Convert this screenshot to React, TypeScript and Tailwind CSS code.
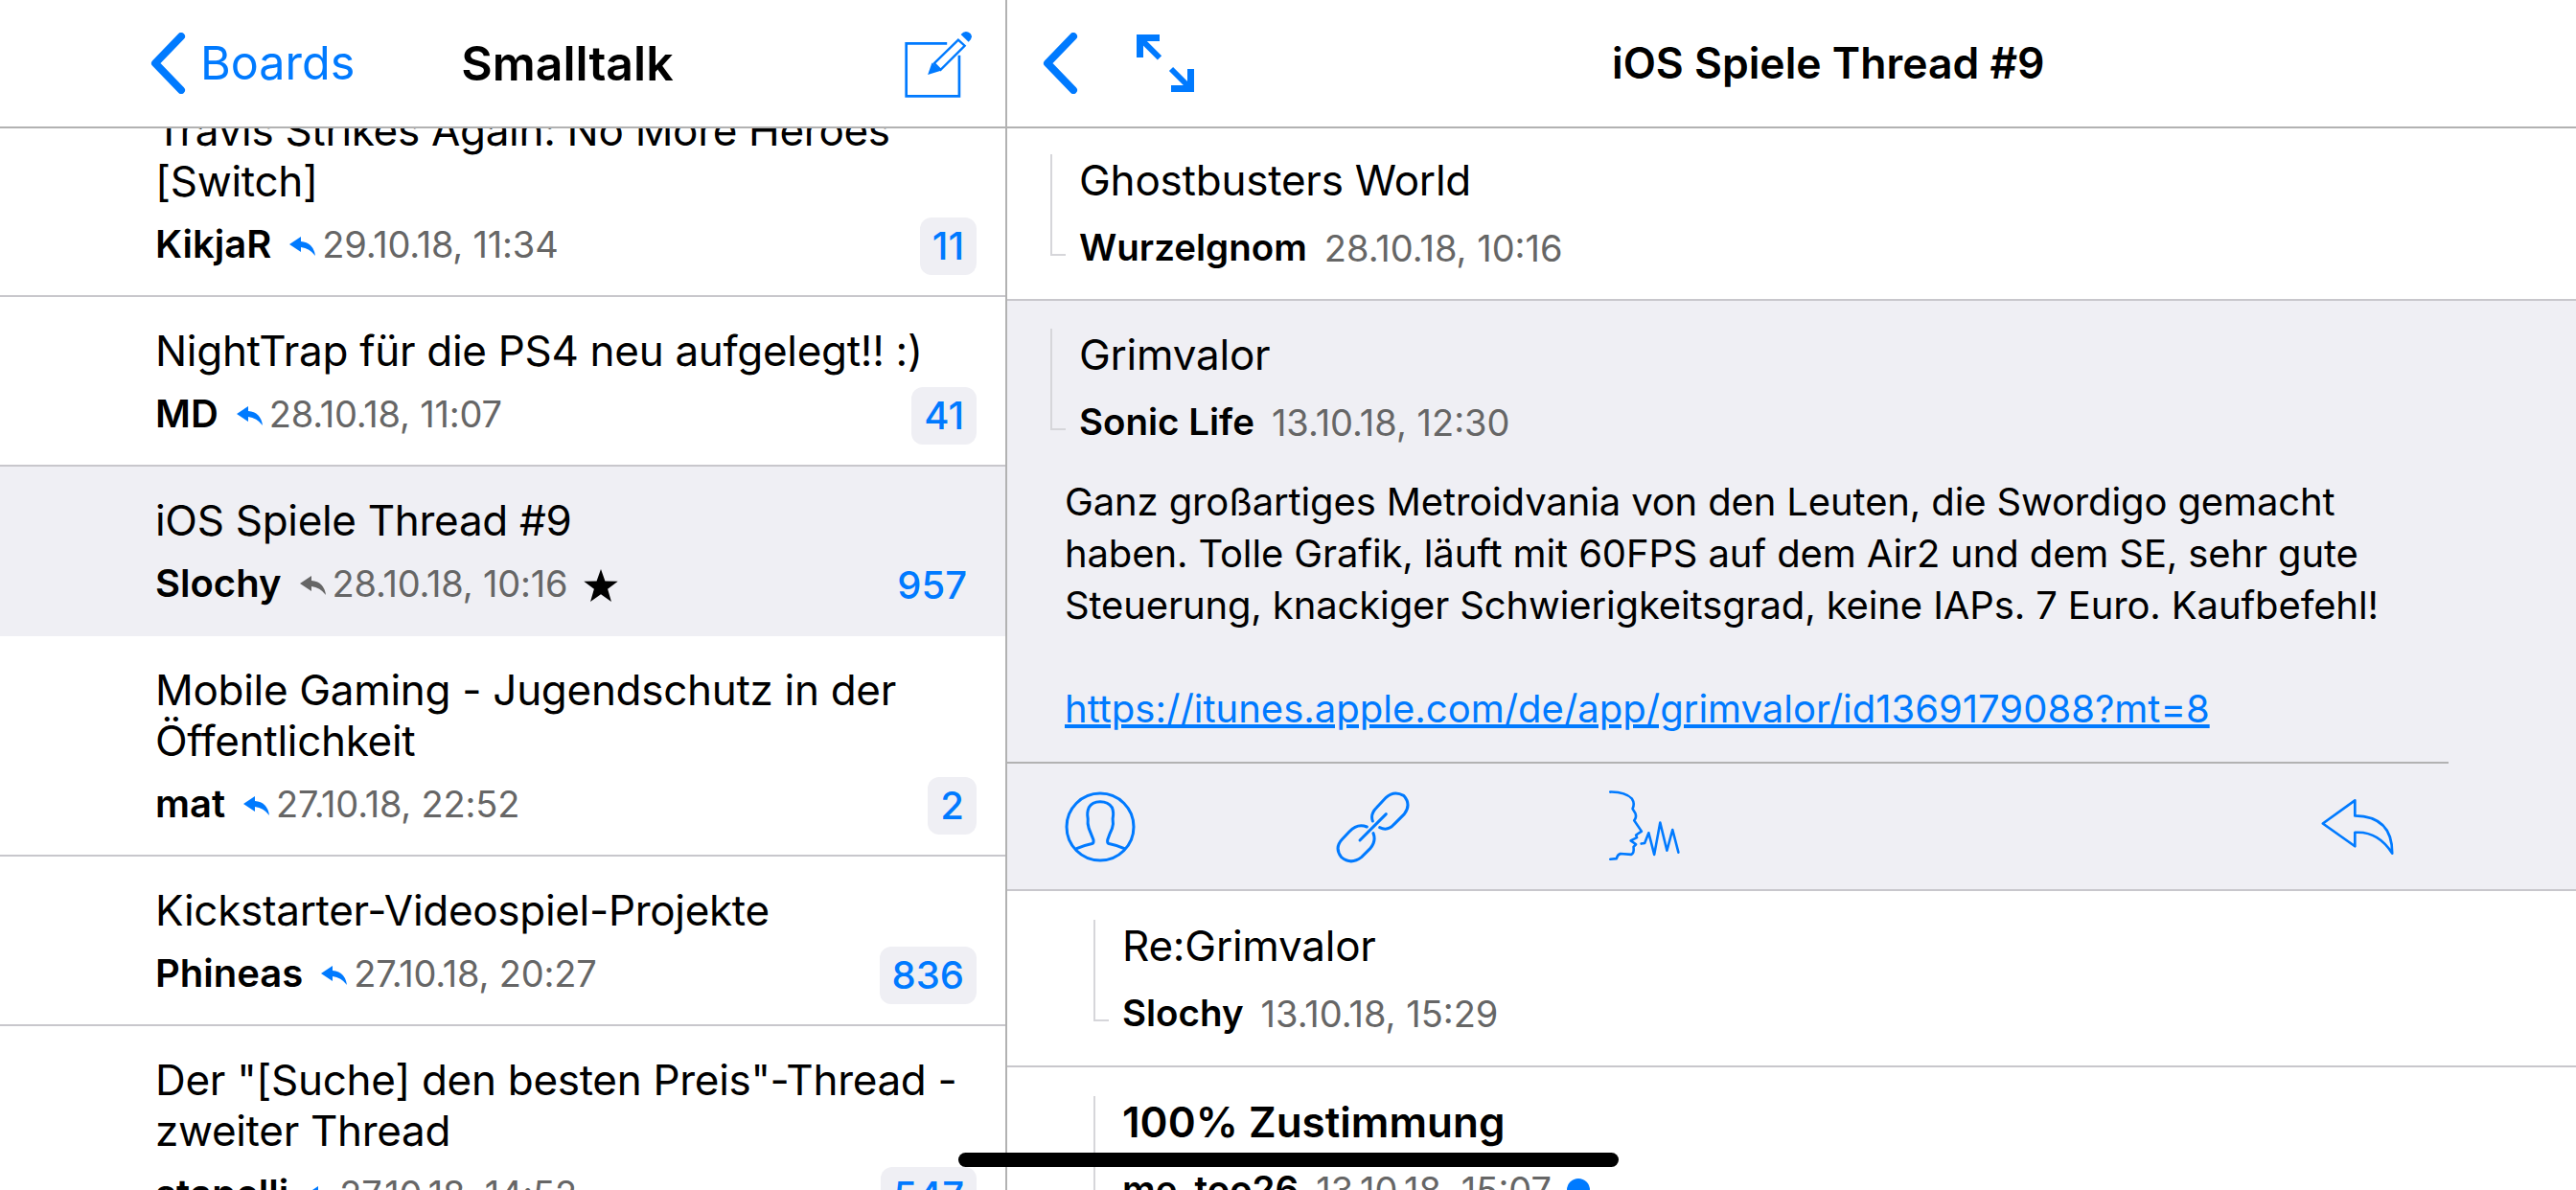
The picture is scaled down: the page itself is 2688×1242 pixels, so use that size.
import React from "react";

const Reply = ({ gray }: { gray?: boolean }) => (
  <svg width="27" height="20" viewBox="0 0 27 20" className="shrink-0">
    <path
      d="M0 8 L12 0 L12 5 Q25 6 27 20 Q21 12 12 11 L12 16 Z"
      fill={gray ? "#666666" : "#007aff"}
    />
  </svg>
);

const BackChevron = () => (
  <svg width="38" height="64" viewBox="0 0 38 64" className="shrink-0">
    <path
      d="M32 4 L5 32 L32 60"
      fill="none"
      stroke="#007aff"
      strokeWidth="8"
      strokeLinecap="round"
      strokeLinejoin="round"
    />
  </svg>
);

const ComposeIcon = () => (
  <svg width="72" height="71" viewBox="70 60 215 212" className="shrink-0">
    <path d="M205 103 L78 103 L78 267 L243 267 L243 140" fill="none" stroke="#007aff" strokeWidth="8" />
    <path d="M165 165 L240 92 L260 110 L185 185 Z" fill="none" stroke="#007aff" strokeWidth="7" />
    <path d="M145 200 L158 163 L186 188 Z" fill="#007aff" />
    <path d="M248 75 Q262 58 278 72 Q288 85 272 98 Z" fill="#007aff" />
  </svg>
);

const ExpandIcon = () => (
  <svg width="60" height="60" viewBox="348 75 180 180" className="shrink-0">
    <path d="M348 75 L420 75 L420 96 L369 96 L369 147 L348 147 Z" fill="#007aff" />
    <path d="M360 88 L420 148" stroke="#007aff" strokeWidth="18" />
    <path d="M528 183 L528 255 L456 255 L456 234 L507 234 L507 183 Z" fill="#007aff" />
    <path d="M456 183 L516 243" stroke="#007aff" strokeWidth="18" />
  </svg>
);

const PersonIcon = () => (
  <svg width="74" height="74" viewBox="65 40 220 220" className="shrink-0" fill="none" stroke="#007aff" strokeWidth="9">
    <circle cx="175" cy="150" r="104" />
    <path d="M100 218 Q125 207 150 202 Q156 200 154 190 Q146 170 140 155 Q135 140 137 125 Q133 105 140 90 Q150 72 175 72 Q200 72 212 90 Q218 105 214 125 Q217 140 212 155 Q205 170 198 190 Q196 200 202 202 Q228 207 252 218" />
  </svg>
);

const LinkIcon = () => (
  <svg width="80" height="80" viewBox="65 30 240 240" className="shrink-0" fill="none" stroke="#007aff" strokeWidth="9" strokeLinecap="round">
    <path d="M183 132 Q175 110 195 90 L225 58 Q250 35 280 52 Q305 80 282 110 L250 142 Q230 165 205 152" />
    <path d="M165 150 Q135 138 110 165 L88 188 Q62 215 85 245 Q115 270 148 245 L175 218 Q195 195 185 170" />
    <path d="M143 192 L225 110" />
  </svg>
);

const SpeechIcon = () => (
  <svg width="76" height="75" viewBox="45 35 235 232" className="shrink-0 -mt-[2px]" fill="none" stroke="#007aff" strokeWidth="8" strokeLinecap="round" strokeLinejoin="round">
    <path d="M52 43 Q100 42 122 65 Q132 80 124 97 L133 112 Q138 125 129 135 L153 170 L135 182 L138 190 L118 200 L135 212 L127 220 Q130 240 120 245 L85 242 Q75 245 72 258 L52 260" />
    <path d="M152 210 L163 208 L176 175 L194 245 L213 142 L235 232 L253 165 L272 238" />
  </svg>
);

const ReplyOutline = () => (
  <svg width="78" height="61" viewBox="60 60 232 182" className="shrink-0">
    <path
      d="M168 70 L68 142 L168 213 L168 170 Q240 165 284 235 Q285 120 168 118 Z"
      fill="none"
      stroke="#007aff"
      strokeWidth="8"
      strokeLinejoin="round"
    />
  </svg>
);

const Star = () => (
  <svg width="36" height="34" viewBox="0 0 24 23" className="shrink-0 ml-[17px]">
    <path d="M12 0 L15 8.5 L24 8.7 L16.8 14.1 L19.4 23 L12 17.7 L4.6 23 L7.2 14.1 L0 8.7 L9 8.5 Z" fill="#000000" />
  </svg>
);

interface BoardThread {
  title: string[];
  author: string;
  date: string;
  count: string;
  active?: boolean;
  starred?: boolean;
}

const boardThreads: BoardThread[] = [
  { title: ["Travis Strikes Again: No More Heroes", "[Switch]"], author: "KikjaR", date: "29.10.18, 11:34", count: "11" },
  { title: ["NightTrap für die PS4 neu aufgelegt!! :)"], author: "MD", date: "28.10.18, 11:07", count: "41" },
  { title: ["iOS Spiele Thread #9"], author: "Slochy", date: "28.10.18, 10:16", count: "957", active: true, starred: true },
  { title: ["Mobile Gaming - Jugendschutz in der", "Öffentlichkeit"], author: "mat", date: "27.10.18, 22:52", count: "2" },
  { title: ["Kickstarter-Videospiel-Projekte"], author: "Phineas", date: "27.10.18, 20:27", count: "836" },
  { title: ['Der "[Suche] den besten Preis"-Thread -', "zweiter Thread"], author: "stapelli", date: "27.10.18, 14:52", count: "547" },
];

function BoardRow({ thread }: { thread: BoardThread }) {
  return (
    <div
      className={
        thread.active
          ? "bg-[#efeff4] pl-[162px] pr-[30px] pt-[30px] pb-[23px]"
          : "border-b-2 border-[#c8c7cc] pl-[162px] pr-[30px] pt-[30px] pb-[21px]"
      }
    >
      {thread.title.map((line) => (
        <div key={line} className="text-[44px] tracking-[-0.3px] leading-[53px] h-[53px] whitespace-nowrap text-black">
          {line}
        </div>
      ))}
      <div className="flex items-center h-[60px] mt-[11px]">
        <span className="text-[40px] font-semibold text-black mr-[19px] mb-[4px]">{thread.author}</span>
        <Reply gray={thread.active} />
        <span className="text-[38px] tracking-[-0.2px] text-[#666666] ml-[7px] mb-[4px]">{thread.date}</span>
        {thread.starred && <Star />}
        <span
          className={
            thread.active
              ? "ml-auto h-[60px] px-[10px] rounded-[12px] flex items-center text-[40px] font-medium text-[#007aff]"
              : "ml-auto h-[60px] px-[13px] rounded-[12px] flex items-center text-[40px] font-medium text-[#007aff] bg-[#efeff4]"
          }
        >
          {thread.count}
        </span>
      </div>
    </div>
  );
}

function PostHead({
  title,
  author,
  date,
  bold,
  unread,
  indent,
}: {
  title: string;
  author: string;
  date: string;
  bold?: boolean;
  unread?: boolean;
  indent?: boolean;
}) {
  return (
    <div className={indent ? "flex pl-[90px]" : "flex pl-[45px]"}>
      <div className="w-[16px] h-[106px] border-l-2 border-b-2 border-[#d6d6da] shrink-0" />
      <div className="ml-[14px]">
        <div className={bold ? "text-[44px] leading-[54px] font-semibold text-black" : "text-[44px] tracking-[-0.23px] leading-[54px] text-black"}>
          {title}
        </div>
        <div className="flex items-center h-[56px] mt-[16px]">
          <span className="text-[38.5px] font-semibold text-black mr-[18px]">{author}</span>
          <span className="text-[38px] text-[#666666]">{date}</span>
          {unread && <span className="ml-[16px] w-[24px] h-[24px] rounded-full bg-[#007aff]" />}
        </div>
      </div>
    </div>
  );
}

const bodyLines = [
  "Ganz großartiges Metroidvania von den Leuten, die Swordigo gemacht",
  "haben. Tolle Grafik, läuft mit 60FPS auf dem Air2 und dem SE, sehr gute",
  "Steuerung, knackiger Schwierigkeitsgrad, keine IAPs. 7 Euro. Kaufbefehl!",
];

export default function App() {
  return (
    <div className="relative flex w-[2688px] h-[1242px] overflow-hidden bg-white font-['Inter',sans-serif]">
      {/* thread list */}
      <div className="w-[1051px] h-full shrink-0 flex flex-col border-r-2 border-[#b2b2b2]">
        <div className="flex items-center h-[134px] shrink-0 border-b-2 border-[#b2b2b2] bg-white z-10 pl-[157px] pr-[34px]">
          <BackChevron />
          <span className="text-[48.5px] text-[#007aff] ml-[14px]">Boards</span>
          <span className="text-[50px] font-semibold text-black ml-[111px]">Smalltalk</span>
          <div className="ml-auto">
            <ComposeIcon />
          </div>
        </div>
        <div className="flex-1 overflow-hidden">
          <div className="-mt-[54px]">
            {boardThreads.map((t) => (
              <BoardRow key={t.author} thread={t} />
            ))}
          </div>
        </div>
      </div>

      {/* posts */}
      <div className="flex-1 h-full flex flex-col min-w-0">
        <div className="flex items-center h-[134px] shrink-0 border-b-2 border-[#b2b2b2] pl-[37px]">
          <BackChevron />
          <div className="ml-[60px]">
            <ExpandIcon />
          </div>
          <span className="ml-[436px] text-[44.5px] font-semibold text-black">iOS Spiele Thread #9</span>
        </div>
        <div className="flex-1 overflow-hidden">
          <div className="border-b-2 border-[#c8c7cc] pt-[27px] pb-[25px]">
            <PostHead title="Ghostbusters World" author="Wurzelgnom" date="28.10.18, 10:16" />
          </div>
          <div className="bg-[#efeff4] border-b-2 border-[#c8c7cc] pt-[29px]">
            <PostHead title="Grimvalor" author="Sonic Life" date="13.10.18, 12:30" />
            <div className="pl-[60px] mt-[28px] text-[40px] leading-[54px] text-black">
              {bodyLines.map((line) => (
                <div key={line} className="whitespace-nowrap tracking-[-0.13px]">
                  {line}
                </div>
              ))}
              <div className="h-[54px]" />
              <div className="whitespace-nowrap text-[#007aff] underline">
                https://itunes.apple.com/de/app/grimvalor/id1369179088?mt=8
              </div>
            </div>
            <div className="w-[1504px] h-[133px] mt-[28px] border-t-2 border-[#b2b2b2] flex items-center pl-[60px] pr-[56px]">
              <PersonIcon />
              <div className="ml-[208px]">
                <LinkIcon />
              </div>
              <div className="ml-[205px]">
                <SpeechIcon />
              </div>
              <div className="ml-auto">
                <ReplyOutline />
              </div>
            </div>
          </div>
          <div className="border-b-2 border-[#c8c7cc] pt-[30px] pb-[26px]">
            <PostHead indent title="Re:Grimvalor" author="Slochy" date="13.10.18, 15:29" />
          </div>
          <div className="pt-[30px]">
            <PostHead indent bold unread title="100% Zustimmung" author="me_too26" date="13.10.18, 15:07" />
          </div>
        </div>
      </div>

      {/* home indicator */}
      <div className="absolute left-[1000px] top-[1203px] w-[689px] h-[15px] rounded-full bg-black" />
    </div>
  );
}
